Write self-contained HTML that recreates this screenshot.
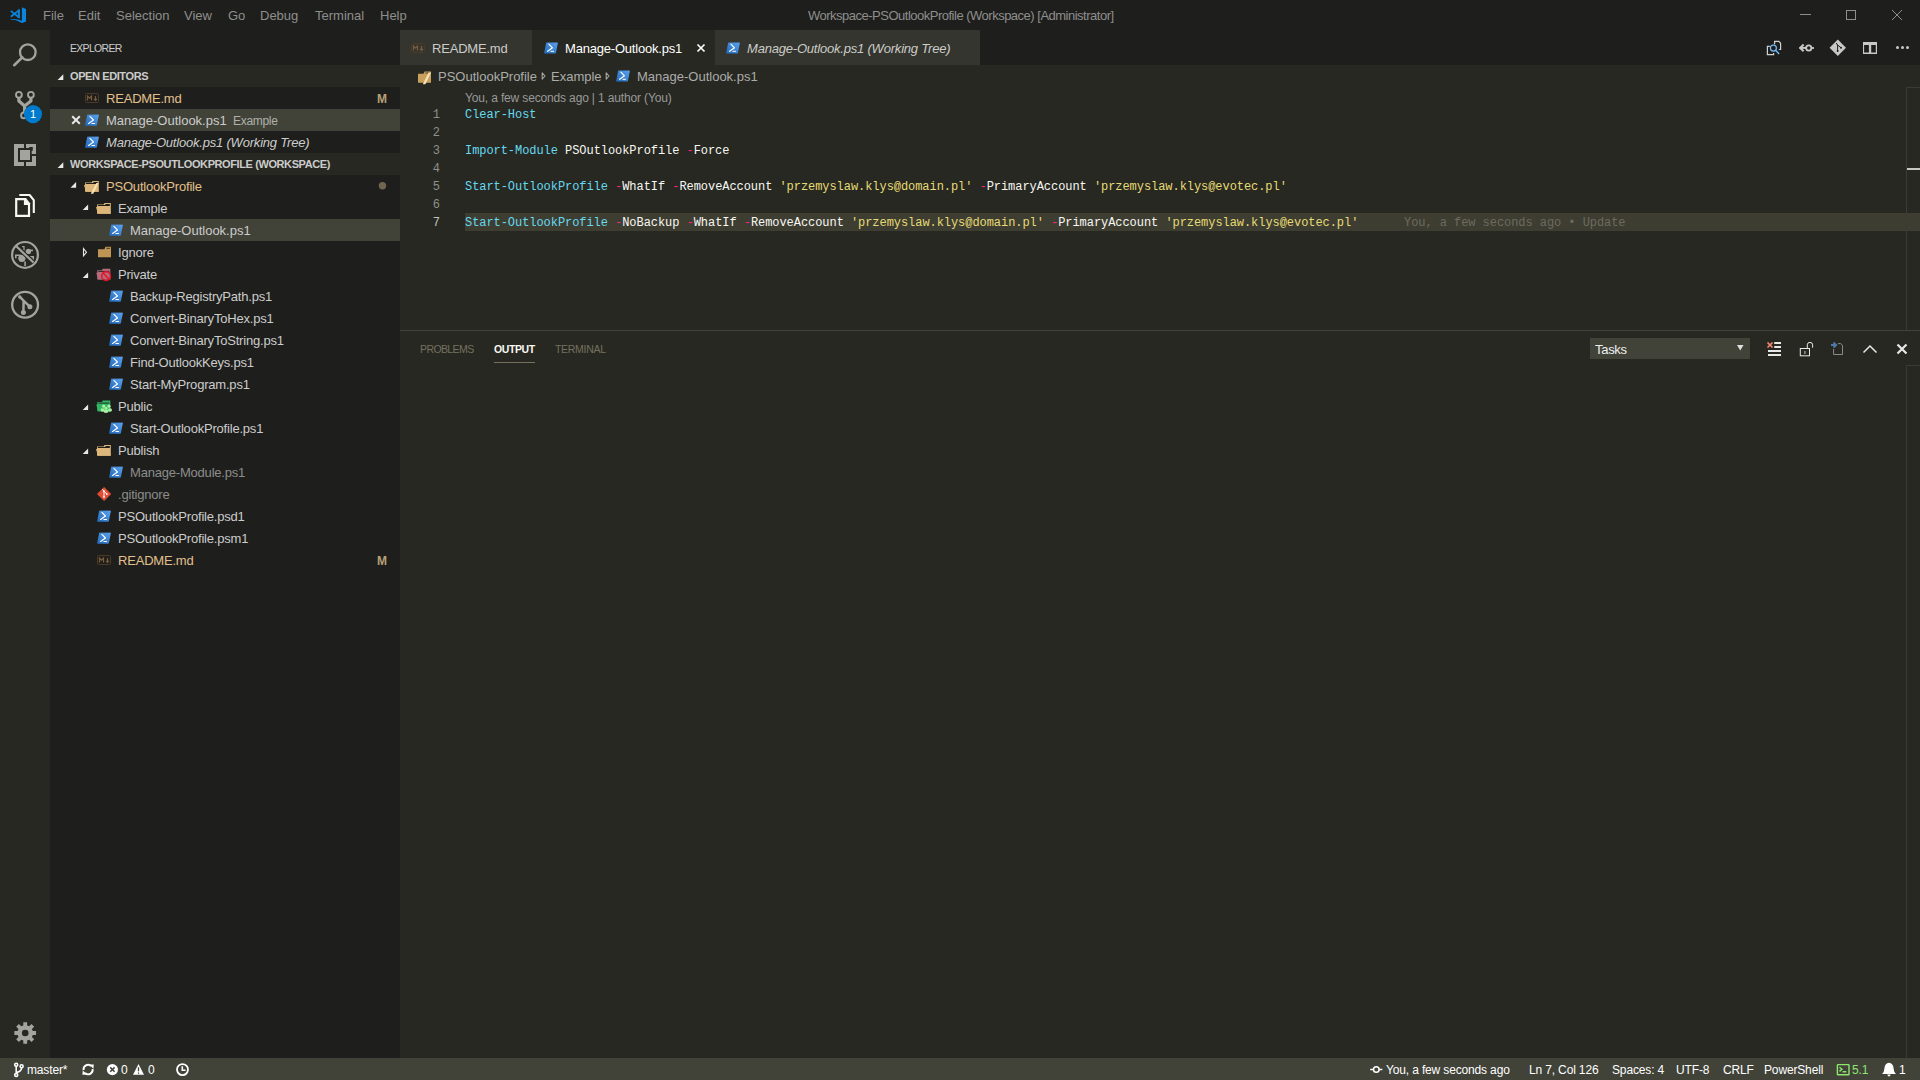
<!DOCTYPE html>
<html><head><meta charset="utf-8">
<style>
*{margin:0;padding:0;box-sizing:border-box}
html,body{width:1920px;height:1080px;overflow:hidden;background:#272822;font-family:"Liberation Sans",sans-serif;font-size:13px;color:#cccccc}
.a{position:absolute;white-space:pre}
#title{left:0;top:0;width:1920px;height:30px;background:#1e1f1c}
.m{top:8px;color:#8e8e8d;font-size:13px;line-height:16px}
#act{left:0;top:30px;width:50px;height:1028px;background:#272822}
#side{left:50px;top:30px;width:350px;height:1028px;background:#1e1f1c}
#tabs{left:400px;top:30px;width:1520px;height:35px;background:#1e1f1c}
.tab{position:absolute;top:30px;height:35px;background:#34352f}
.tt{top:41px;line-height:16px;font-size:13px;color:#ccccc7;letter-spacing:-0.2px}
#status{left:0;top:1058px;width:1920px;height:22px;background:#414339}
.st{top:1062px;line-height:16px;font-size:12px;color:#ffffff;letter-spacing:-0.15px}
.row{position:absolute;left:50px;width:350px;height:22px}
.lbl{position:absolute;line-height:16px;font-size:13px;white-space:pre;letter-spacing:-0.2px}
.hdr{position:absolute;left:50px;width:350px;height:22px;background:#272822}
.hl{position:absolute;left:20px;top:4px;font-weight:bold;font-size:11px;line-height:14px;color:#cccccc;white-space:pre;letter-spacing:-0.4px}
.sel{background:#414339}
.mod{color:#e2c08d}
.ign{color:#8c8c8c}
.code{font-family:"Liberation Mono",monospace;font-size:12px;line-height:18px;white-space:pre;letter-spacing:-0.056px}
.ln{position:absolute;left:400px;width:40px;text-align:right;font-family:"Liberation Mono",monospace;font-size:12px;line-height:18px;color:#90908a}
.cl{position:absolute;left:465px;height:18px}
.f{color:#66d9ef}
.o{color:#f92672}
.s{color:#e6db74}
.w{color:#f8f8f2}
</style></head><body>
<!-- title bar -->
<div id="title" class="a"></div>
<div class="a m" style="left:43px">File</div>
<div class="a m" style="left:78px">Edit</div>
<div class="a m" style="left:116px">Selection</div>
<div class="a m" style="left:184px">View</div>
<div class="a m" style="left:228px">Go</div>
<div class="a m" style="left:260px">Debug</div>
<div class="a m" style="left:315px">Terminal</div>
<div class="a m" style="left:380px">Help</div>
<div class="a m" style="left:808px;letter-spacing:-0.5px">Workspace-PSOutlookProfile (Workspace) [Administrator]</div>

<!-- activity bar -->
<div id="act" class="a"></div>
<!-- sidebar -->
<div id="side" class="a"></div>
<div class="a" style="left:70px;top:41px;font-size:10.5px;line-height:14px;color:#cccccc;letter-spacing:-0.7px">EXPLORER</div>
<div class="hdr" style="top:65px"><span class="hl">OPEN EDITORS</span></div>
<div class="row" style="top:87px"><span class="lbl mod" style="left:56px;top:4px">README.md</span><span class="lbl" style="left:327px;top:4px;font-weight:bold;font-size:12px;color:#b8a077">M</span></div>
<div class="row sel" style="top:109px"><span class="lbl" style="left:56px;top:4px;letter-spacing:0">Manage-Outlook.ps1</span><span class="lbl" style="left:183px;top:4px;font-size:12px;color:#b0b0aa;letter-spacing:-0.3px">Example</span></div>
<div class="row" style="top:131px"><span class="lbl" style="left:56px;top:4px;font-style:italic">Manage-Outlook.ps1 (Working Tree)</span></div>
<div class="hdr" style="top:153px"><span class="hl">WORKSPACE-PSOUTLOOKPROFILE (WORKSPACE)</span></div>
<div class="row" style="top:175px"><span class="lbl mod" style="left:56px;top:4px">PSOutlookProfile</span></div>
<div class="row" style="top:197px"><span class="lbl" style="left:68px;top:4px">Example</span></div>
<div class="row sel" style="top:219px"><span class="lbl" style="left:80px;top:4px;letter-spacing:0">Manage-Outlook.ps1</span></div>
<div class="row" style="top:241px"><span class="lbl" style="left:68px;top:4px">Ignore</span></div>
<div class="row" style="top:263px"><span class="lbl" style="left:68px;top:4px">Private</span></div>
<div class="row" style="top:285px"><span class="lbl" style="left:80px;top:4px">Backup-RegistryPath.ps1</span></div>
<div class="row" style="top:307px"><span class="lbl" style="left:80px;top:4px">Convert-BinaryToHex.ps1</span></div>
<div class="row" style="top:329px"><span class="lbl" style="left:80px;top:4px">Convert-BinaryToString.ps1</span></div>
<div class="row" style="top:351px"><span class="lbl" style="left:80px;top:4px">Find-OutlookKeys.ps1</span></div>
<div class="row" style="top:373px"><span class="lbl" style="left:80px;top:4px">Start-MyProgram.ps1</span></div>
<div class="row" style="top:395px"><span class="lbl" style="left:68px;top:4px">Public</span></div>
<div class="row" style="top:417px"><span class="lbl" style="left:80px;top:4px">Start-OutlookProfile.ps1</span></div>
<div class="row" style="top:439px"><span class="lbl" style="left:68px;top:4px">Publish</span></div>
<div class="row" style="top:461px"><span class="lbl ign" style="left:80px;top:4px">Manage-Module.ps1</span></div>
<div class="row" style="top:483px"><span class="lbl ign" style="left:68px;top:4px">.gitignore</span></div>
<div class="row" style="top:505px"><span class="lbl" style="left:68px;top:4px">PSOutlookProfile.psd1</span></div>
<div class="row" style="top:527px"><span class="lbl" style="left:68px;top:4px">PSOutlookProfile.psm1</span></div>
<div class="row" style="top:549px"><span class="lbl mod" style="left:68px;top:4px">README.md</span><span class="lbl" style="left:327px;top:4px;font-weight:bold;font-size:12px;color:#b8a077">M</span></div>

<!-- tabs -->
<div id="tabs" class="a"></div>
<div class="tab" style="left:400px;width:132px"></div>
<div class="tab" style="left:532px;width:183px;background:#272822"></div>
<div class="tab" style="left:715px;width:265px"></div>
<div class="a tt" style="left:432px">README.md</div>
<div class="a tt" style="left:565px;color:#ffffff">Manage-Outlook.ps1</div>
<div class="a tt" style="left:747px;font-style:italic">Manage-Outlook.ps1 (Working Tree)</div>

<!-- breadcrumbs -->
<div class="a" style="left:438px;top:69px;line-height:16px;color:#acacaa">PSOutlookProfile</div>
<div class="a" style="left:551px;top:69px;line-height:16px;color:#acacaa">Example</div>
<div class="a" style="left:637px;top:69px;line-height:16px;color:#acacaa">Manage-Outlook.ps1</div>

<!-- editor -->
<div class="a" style="left:465px;top:91px;font-size:12px;line-height:15px;color:#999999;letter-spacing:-0.15px">You, a few seconds ago | 1 author (You)</div>
<div class="ln" style="top:106px">1</div>
<div class="ln" style="top:124px">2</div>
<div class="ln" style="top:142px">3</div>
<div class="ln" style="top:160px">4</div>
<div class="ln" style="top:178px">5</div>
<div class="ln" style="top:196px">6</div>
<div class="ln" style="top:214px;color:#c2c2bf">7</div>
<div class="a" style="left:465px;top:213px;width:1455px;height:18px;background:#3e3d32"></div>
<div class="cl code" style="top:106px"><span class="f">Clear-Host</span></div>
<div class="cl code" style="top:142px"><span class="f">Import-Module</span> <span class="w">PSOutlookProfile</span> <span class="o">-</span><span class="w">Force</span></div>
<div class="cl code" style="top:178px"><span class="f">Start-OutlookProfile</span> <span class="o">-</span><span class="w">WhatIf</span> <span class="o">-</span><span class="w">RemoveAccount</span> <span class="s">'przemyslaw.klys@domain.pl'</span> <span class="o">-</span><span class="w">PrimaryAccount</span> <span class="s">'przemyslaw.klys@evotec.pl'</span></div>
<div class="cl code" style="top:214px"><span class="f">Start-OutlookProfile</span> <span class="o">-</span><span class="w">NoBackup</span> <span class="o">-</span><span class="w">WhatIf</span> <span class="o">-</span><span class="w">RemoveAccount</span> <span class="s">'przemyslaw.klys@domain.pl'</span> <span class="o">-</span><span class="w">PrimaryAccount</span> <span class="s">'przemyslaw.klys@evotec.pl'</span></div>
<div class="cl code" style="top:214px;left:1404px;color:#6c6b5f">You, a few seconds ago • Update</div>
<!-- editor scrollbar ruler -->
<div class="a" style="left:1906px;top:87px;width:1px;height:243px;background:#3a3b35"></div>
<div class="a" style="left:1906px;top:87px;width:14px;height:1px;background:#3a3b35"></div>
<div class="a" style="left:1907px;top:168px;width:13px;height:2px;background:#c8c8c0"></div>

<!-- panel -->
<div class="a" style="left:400px;top:330px;width:1520px;height:1px;background:#414339"></div>
<div class="a" style="left:420px;top:342px;font-size:10.5px;line-height:14px;color:#75715e;letter-spacing:-0.6px">PROBLEMS</div>
<div class="a" style="left:494px;top:342px;font-size:10.5px;line-height:14px;color:#f8f8f2;letter-spacing:-0.4px;font-weight:bold">OUTPUT</div>
<div class="a" style="left:555px;top:342px;font-size:10.5px;line-height:14px;color:#75715e;letter-spacing:-0.3px">TERMINAL</div>
<div class="a" style="left:494px;top:362px;width:41px;height:1px;background:#75715e"></div>
<div class="a" style="left:1590px;top:338px;width:160px;height:21px;background:#414339"></div>
<div class="a" style="left:1595px;top:342px;line-height:16px;color:#f0f0f0;letter-spacing:-0.3px">Tasks</div>
<div class="a" style="left:1906px;top:365px;width:1px;height:693px;background:#3a3b35"></div>
<div class="a" style="left:1906px;top:365px;width:14px;height:1px;background:#3a3b35"></div>

<!-- status -->
<div id="status" class="a"></div>
<div class="a st" style="left:27px">master*</div>
<div class="a st" style="left:121px">0</div>
<div class="a st" style="left:148px">0</div>
<div class="a st" style="left:1386px">You, a few seconds ago</div>
<div class="a st" style="left:1529px">Ln 7, Col 126</div>
<div class="a st" style="left:1612px">Spaces: 4</div>
<div class="a st" style="left:1676px">UTF-8</div>
<div class="a st" style="left:1723px">CRLF</div>
<div class="a st" style="left:1764px">PowerShell</div>
<div class="a st" style="left:1852px;color:#8ee66e">5.1</div>
<div class="a st" style="left:1899px">1</div>

<!-- icon overlay -->
<svg class="a" style="left:0;top:0" width="1920" height="1080" viewBox="0 0 1920 1080">
<defs>
  <linearGradient id="psg" x1="0" y1="1" x2="1" y2="0">
    <stop offset="0" stop-color="#2268b8"/><stop offset="1" stop-color="#5aa2f0"/>
  </linearGradient>
  <symbol id="ps" viewBox="0 0 14 12" width="14" height="12">
    <path d="M2.6 0.4 H13.3 Q14 0.4 13.85 1.1 L11.9 10.9 Q11.8 11.6 11.1 11.6 H0.7 Q0 11.6 0.15 10.9 L2.1 1.1 Q2.2 0.4 2.6 0.4Z" fill="url(#psg)"/>
    <path d="M4.9 2.2 L8.5 5.8 L3.6 9.3" fill="none" stroke="#fff" stroke-width="1.15" stroke-linecap="round" stroke-linejoin="round"/>
    <path d="M6.9 9.3 H9.5" stroke="#fff" stroke-width="1.1" stroke-linecap="round"/>
  </symbol>
  <symbol id="md" viewBox="0 0 14 10" width="14" height="10">
    <rect x="0.5" y="0.5" width="13" height="9" rx="1" fill="none" stroke="#4b3a26" stroke-width="1"/>
    <path d="M2.5 7.5 V3 L4.5 5.2 L6.5 3 V7.5" fill="none" stroke="#7a5c3b" stroke-width="1.2"/>
    <path d="M10.5 3 V7.2 M9 5.8 L10.5 7.3 L12 5.8" fill="none" stroke="#7a5c3b" stroke-width="1.2"/>
  </symbol>
  <symbol id="fopen" viewBox="0 0 15 11" width="15" height="11">
    <path d="M1 1.6 H7.6 L8.6 0 H14.8 V10.7 H1Z" fill="#dcb67a"/>
    <path d="M9.4 1.5 H13.8" stroke="#1e1f1c" stroke-width="1"/>
    <path d="M1.8 2.5 H13.8" stroke="#1e1f1c" stroke-width="1"/>
    <path d="M0 3.9 H12.9 L14.8 10.7 H2Z" fill="#dcb67a"/>
  </symbol>
</defs>

<!-- VS Code logo -->
<g fill="#0a84dd">
  <path d="M21.9 7.2 L26 9 V21.5 L21.9 23 Z"/>
  <path d="M10.2 19.6 Q16 19.6 21.9 23 L23 23 V21 Q16 18.6 10.2 19.2Z"/>
  <path d="M17.9 9.6 L19.9 9.2 V18.4 L17.9 18Z"/>
</g>
<path d="M11.4 11.4 L18.6 17 M11.4 16.3 L18.6 10.6" stroke="#0a84dd" stroke-width="1.8" stroke-linecap="round"/>
<!-- window controls -->
<path d="M1800 14.5 H1811" stroke="#8e8e8d" stroke-width="1"/>
<rect x="1846.5" y="10.5" width="9" height="9" fill="none" stroke="#8e8e8d" stroke-width="1"/>
<path d="M1892 10 L1902 20 M1902 10 L1892 20" stroke="#8e8e8d" stroke-width="1"/>

<!-- activity bar icons -->
<g fill="none" stroke="#a4a49f">
  <circle cx="27.8" cy="52.2" r="7.8" stroke-width="2.3"/>
  <path d="M14.2 65.2 L22.3 57.4" stroke-width="2.6" stroke-linecap="round"/>
  <circle cx="18.9" cy="94.8" r="2.9" stroke-width="1.9"/>
  <circle cx="30.9" cy="94.8" r="2.9" stroke-width="1.9"/>
  <circle cx="24" cy="115.4" r="2.9" stroke-width="1.9"/>
  <path d="M18.9 97.7 V101 L24.6 106 V112.5 M30.9 97.7 V101 L24.6 106" stroke-width="3.2" stroke-linejoin="round"/>
</g>
<circle cx="33" cy="114.1" r="9.1" fill="#007acc"/>
<text x="33" y="118.3" font-family="Liberation Sans" font-size="11" fill="#ffffff" text-anchor="middle">1</text>
<g fill="#a4a49f">
  <path d="M14 144 H24 V148 H18 V162 H24 V166 H14Z"/>
  <rect x="20" y="150" width="10" height="10"/>
  <path d="M26 162 H32 V156 H36 V166 H26Z"/>
  <path d="M26 144 H36 V154 H31.7 V150.8 H32.8 V147.1 H29.2 V148 H26Z"/>
</g>
<!-- files icon (active) -->
<g>
  <path d="M19.3 195 H29.6 L33.8 200.2 V213" fill="none" stroke="#f8f8f2" stroke-width="2.1" stroke-linejoin="round"/>
  <path d="M14 197 H26.5 L31.2 202.9 V218 H14Z" fill="#272822"/>
  <path d="M15.1 198.1 H26 L30.1 203.3 V216.9 H15.1Z" fill="#f8f8f2"/>
  <path d="M17.3 200.3 H23.9 V205.1 H27.9 V214.7 H17.3Z" fill="#272822"/>
</g>
<!-- debug icon -->
<g fill="#a4a49f">
  <circle cx="21.9" cy="258.3" r="3.6"/>
  <circle cx="28.4" cy="251.4" r="2.7"/>
  <path d="M22.2 246 H24.6 V250.6 H23.4 V247.2 H22.2Z"/>
  <path d="M30 249.6 L33 249.6 V251.2 L30 251.2Z"/>
  <path d="M15 254.4 H20.6 V256 H16.6 V258.2 H15Z"/>
  <path d="M30.2 256 H34 V259.8 H32.4 V257.6 H30.2Z"/>
  <path d="M24.3 261.6 H25.9 V266 H24.3Z"/>
</g>
<g fill="none" stroke="#272822">
  <path d="M16 246 L33.5 262.5" stroke-width="4.2"/>
</g>
<g fill="none" stroke="#a4a49f">
  <circle cx="25" cy="254.9" r="12.9" stroke-width="2.2"/>
  <path d="M16 246 L33.5 262.5" stroke-width="2.2"/>
</g>
<!-- gitlens icon -->
<g fill="none" stroke="#a4a49f">
  <circle cx="25.1" cy="304.8" r="12.9" stroke-width="2.3"/>
  <path d="M19.8 296.9 L23.6 300.6 L23.4 312.4 M24 301.2 L29.8 306.7" stroke-width="2.5" stroke-linecap="round" stroke-linejoin="round"/>
</g>
<g fill="#a4a49f">
  <circle cx="19.8" cy="296.9" r="1.7"/>
  <circle cx="23.4" cy="312.4" r="2.5"/>
  <circle cx="29.9" cy="306.8" r="2.5"/>
</g>
<!-- gear -->
<g fill="#a4a49f" transform="translate(25.2 1033)">
  <path d="M-1.90 -7.57 L-1.90 -10.83 L1.90 -10.83 L1.90 -7.57 L4.01 -6.69 L6.32 -9.00 L9.00 -6.32 L6.69 -4.01 L7.57 -1.90 L10.83 -1.90 L10.83 1.90 L7.57 1.90 L6.69 4.01 L9.00 6.32 L6.32 9.00 L4.01 6.69 L1.90 7.57 L1.90 10.83 L-1.90 10.83 L-1.90 7.57 L-4.01 6.69 L-6.32 9.00 L-9.00 6.32 L-6.69 4.01 L-7.57 1.90 L-10.83 1.90 L-10.83 -1.90 L-7.57 -1.90 L-6.69 -4.01 L-9.00 -6.32 L-6.32 -9.00 L-4.01 -6.69Z"/>
  <circle cx="0" cy="0" r="3.3" fill="#272822"/>
</g>
<!-- sidebar icons -->
<path d="M57.6 80 L63.3 74.3 V80Z" fill="#e8e8e8"/>
<path d="M57.6 168 L63.3 162.3 V168Z" fill="#e8e8e8"/>
<use href="#md" x="85" y="93"/>
<path d="M72.2 116.2 L79.8 123.8 M79.8 116.2 L72.2 123.8" stroke="#e8e8e8" stroke-width="2"/>
<use href="#ps" x="85" y="114.2"/>
<use href="#ps" x="85" y="136.2"/>
<!-- PSOutlookProfile root -->
<path d="M70.5 187.7 L76.1 182.1 V187.7Z" fill="#e8e8e8"/>
<use href="#fopen" x="84" y="181"/>
<path d="M98.6 183 L96.4 183 L90.8 193.8 L93.2 193.8Z" fill="#fbe6b0"/>
<!-- Example -->
<path d="M82.7 209.9 L88.1 204.5 V209.9Z" fill="#e8e8e8"/>
<use href="#fopen" x="96" y="203"/>
<use href="#ps" x="109" y="224.2"/>
<!-- Ignore -->
<path d="M83.5 248.6 L86.5 252.2 L83.5 255.8Z" fill="none" stroke="#e8e8e8" stroke-width="1.1" stroke-linejoin="miter"/>
<path d="M98 249.3 H104.4 L105.5 246.8 H111 V257.2 H98Z" fill="#c09553"/>
<path d="M106.5 248.3 H110" stroke="#1e1f1c" stroke-width="0.8"/>
<!-- Private -->
<path d="M82.7 277.9 L88.1 272.5 V277.9Z" fill="#e8e8e8"/>
<g transform="translate(96.3 268.8)">
  <path d="M1 1.5 H5.5 L6.5 0 H14 V10.7 H1Z" fill="#b46b7d"/>
  <path d="M2 2.6 H13" stroke="#1e1f1c" stroke-width="0.9"/>
  <path d="M0 3.9 H13 L14.3 10.7 H1.7Z" fill="#b46b7d"/>
</g>
<circle cx="106.1" cy="276.1" r="4.4" fill="none" stroke="#e81123" stroke-width="1.4"/>
<path d="M103 273 L109.2 279.2" stroke="#e81123" stroke-width="1.4"/>
<use href="#ps" x="109" y="290.2"/>
<use href="#ps" x="109" y="312.2"/>
<use href="#ps" x="109" y="334.2"/>
<use href="#ps" x="109" y="356.2"/>
<use href="#ps" x="109" y="378.2"/>
<!-- Public -->
<path d="M82.7 409.9 L88.1 404.5 V409.9Z" fill="#e8e8e8"/>
<g transform="translate(96.3 400.5)">
  <path d="M1 1.5 H5.5 L6.5 0 H14 V10.7 H1Z" fill="#34b565"/>
  <path d="M2 2.6 H13" stroke="#1e1f1c" stroke-width="0.9"/>
  <path d="M0 3.9 H13 L14.3 10.7 H1.7Z" fill="#34b565"/>
</g>
<g fill="#a6f2a0">
  <circle cx="103.7" cy="406.2" r="1.6"/><circle cx="109" cy="406.2" r="1.6"/><circle cx="106" cy="408.2" r="1.5"/>
  <ellipse cx="102.5" cy="410" rx="2" ry="1.8"/><ellipse cx="110" cy="410" rx="2" ry="1.8"/><ellipse cx="106" cy="411.3" rx="2.6" ry="1.8"/>
</g>
<use href="#ps" x="109" y="422.2"/>
<!-- Publish -->
<path d="M82.7 453.9 L88.1 448.5 V453.9Z" fill="#e8e8e8"/>
<use href="#fopen" x="96" y="445"/>
<use href="#ps" x="109" y="466.2"/>
<!-- gitignore -->
<path d="M104.1 486.9 L111.2 494 L104.1 501.1 L97 494Z" fill="#e44d33"/>
<path d="M102.3 489.2 L104 491.2 L106.8 494 M104 491.2 V497" stroke="#ffffff" stroke-width="1" fill="none"/>
<circle cx="104" cy="491.2" r="0.9" fill="#fff"/><circle cx="104" cy="497" r="0.9" fill="#fff"/><circle cx="106.8" cy="494" r="0.9" fill="#fff"/>
<use href="#ps" x="97" y="510.2"/>
<use href="#ps" x="97" y="532.2"/>
<use href="#md" x="97" y="555"/>
<!-- modified dot -->
<circle cx="382.5" cy="185.7" r="3.7" fill="#6f6550"/>

<!-- tab icons -->
<use href="#md" x="411" y="43"/>
<use href="#ps" x="544" y="42"/>
<path d="M697.5 44.5 L704.5 51.5 M704.5 44.5 L697.5 51.5" stroke="#ffffff" stroke-width="1.7"/>
<use href="#ps" x="726" y="42"/>
<!-- breadcrumb icons -->
<path d="M418 73.8 H423.5 L424.6 71.6 H431 V82.8 H418Z" fill="#c9a05c"/>
<path d="M425.5 73 H430" stroke="#272822" stroke-width="0.8"/>
<path d="M431 72.4 L428.6 72.4 L422.8 84.3 L425.4 84.3Z" fill="#f6e4b4"/>
<path d="M542.2 72.8 L545 76 L542.2 79.2Z" fill="none" stroke="#a8a8a0" stroke-width="1.1" stroke-linejoin="round"/>
<path d="M606.2 72.8 L609 76 L606.2 79.2Z" fill="none" stroke="#a8a8a0" stroke-width="1.1" stroke-linejoin="round"/>
<use href="#ps" x="616" y="70"/>

<!-- editor actions -->
<g fill="none" stroke="#d0d0d0" stroke-width="1.2">
  <path d="M1774.6 44.3 V41.4 H1778.8 L1780.6 43.3 V49.5 H1778.8"/>
  <path d="M1769.8 46.4 H1767.4 V54.6 H1773.6 V53"/>
</g>
<g fill="none" stroke="#75beff" stroke-width="1.2">
  <circle cx="1773.4" cy="48.1" r="3"/>
  <path d="M1775.6 50.3 L1779.2 54" stroke-width="1.4"/>
</g>
<g fill="none" stroke="#c8c8c8">
  <path d="M1803.6 44.5 L1800.2 47.9 L1803.6 51.3" stroke-width="2"/>
  <path d="M1799.5 47.9 H1806" stroke-width="2"/>
  <circle cx="1808.75" cy="48" r="2.6" stroke-width="1.8"/>
  <path d="M1811.3 48 H1814" stroke-width="1.8"/>
</g>
<path d="M1837.8 39.6 L1846 47.8 L1837.8 56 L1829.6 47.8Z" fill="#c8c8c8"/>
<path d="M1836.2 43 L1837.6 45 V51 M1837.6 45 L1841 47.8" stroke="#1e1f1c" stroke-width="1" fill="none"/>
<circle cx="1837.6" cy="51" r="1" fill="#1e1f1c"/><circle cx="1841" cy="47.8" r="1" fill="#1e1f1c"/>
<g fill="#c8c8c8">
  <path d="M1863 42 H1877 V54 H1863Z M1864.1 45 V52.6 H1868.9 V45Z M1871.2 45 V52.6 H1875.8 V45Z" fill-rule="evenodd"/>
  <circle cx="1897.5" cy="47.5" r="1.5"/><circle cx="1902.5" cy="47.5" r="1.5"/><circle cx="1907.5" cy="47.5" r="1.5"/>
</g>

<!-- panel icons -->
<path d="M1737 345 H1743.5 L1740.25 350.5Z" fill="#e0e0e0"/>
<path d="M1767.5 342.5 L1772.5 347.5 M1772.5 342.5 L1767.5 347.5" stroke="#f48771" stroke-width="1.7"/>
<path d="M1774.2 343 H1781 M1774.2 347 H1781 M1768 351 H1781 M1768 355 H1781" stroke="#e8e8e8" stroke-width="1.8"/>
<rect x="1800.3" y="348.5" width="9.2" height="7.3" fill="none" stroke="#e8e8e8" stroke-width="1"/>
<rect x="1804.2" y="351" width="1.4" height="3" fill="#9a9a9a"/>
<path d="M1807.3 348 V344.8 Q1807.3 342.4 1810 342.4 Q1812.6 342.4 1812.6 344.8 V347.7" fill="none" stroke="#e8e8e8" stroke-width="1"/>
<path d="M1833.6 348.8 V354.5 H1842.5 V345.2 L1840.6 343.6 H1838" fill="none" stroke="#8a8a8a" stroke-width="1"/>
<path d="M1831 345 H1835 M1833.5 342.5 L1836.2 345 L1833.5 347.5" stroke="#4d7aa6" stroke-width="1.8" fill="none"/>
<path d="M1863.5 352.5 L1870 346 L1876.5 352.5" fill="none" stroke="#e8e8e8" stroke-width="1.5"/>
<path d="M1897.5 344.5 L1906.5 353.5 M1906.5 344.5 L1897.5 353.5" stroke="#e8e8e8" stroke-width="2.2"/>

<!-- status icons -->
<g fill="none" stroke="#ffffff" stroke-width="1.6">
  <circle cx="16.2" cy="1064.8" r="1.5"/><circle cx="16.2" cy="1075" r="1.5"/><circle cx="21.6" cy="1066.3" r="1.5"/>
  <path d="M16.2 1066.3 V1073.5 M21.6 1067.8 Q21.6 1071.2 16.6 1072.6"/>
</g>
<g fill="none" stroke="#ffffff" stroke-width="1.9">
  <path d="M83.6 1070.2 A4.5 4.5 0 0 1 91.2 1066.2"/>
  <path d="M92.6 1069 A4.5 4.5 0 0 1 85 1073"/>
</g>
<path d="M89.2 1064.6 L93.8 1064.4 L93.4 1068.8Z M87 1074.6 L82.4 1074.8 L82.8 1070.4Z" fill="#fff"/>
<circle cx="112.4" cy="1069.6" r="5.6" fill="#fff"/>
<path d="M110.2 1067.4 L114.6 1071.8 M114.6 1067.4 L110.2 1071.8" stroke="#414339" stroke-width="1.5"/>
<path d="M138.5 1064 L144 1074.8 H133Z" fill="#fff"/>
<path d="M138.5 1067.3 V1071.3 M138.5 1072.5 V1073.7" stroke="#414339" stroke-width="1.3"/>
<circle cx="182.5" cy="1069.6" r="5.5" fill="none" stroke="#fff" stroke-width="1.8"/>
<path d="M182.3 1066.3 V1070.3 H185.6" fill="none" stroke="#fff" stroke-width="1.6"/>
<!-- blame status icon -->
<circle cx="1376.3" cy="1069.5" r="2.8" fill="none" stroke="#fff" stroke-width="1.5"/>
<path d="M1370.2 1069.5 H1373.5 M1379.1 1069.5 H1382.3" stroke="#fff" stroke-width="1.5"/>
<!-- powershell status -->
<rect x="1837.4" y="1064.6" width="11.6" height="10.2" rx="0.6" fill="none" stroke="#8ee66e" stroke-width="1.4"/>
<path d="M1839.5 1067.2 L1842 1069.3 L1839.5 1071.4 M1842.6 1071.8 H1846.3" fill="none" stroke="#8ee66e" stroke-width="1.4"/>
<!-- bell -->
<path d="M1889 1062.8 Q1893.2 1063.2 1893.6 1068.5 Q1893.8 1072.3 1896 1074 H1882 Q1884.2 1072.3 1884.4 1068.5 Q1884.8 1063.2 1889 1062.8Z" fill="#fff"/>
<path d="M1887.4 1074.5 H1890.6 Q1890.4 1076.6 1889 1076.6 Q1887.6 1076.6 1887.4 1074.5Z" fill="#fff"/>
</svg>
</body></html>
